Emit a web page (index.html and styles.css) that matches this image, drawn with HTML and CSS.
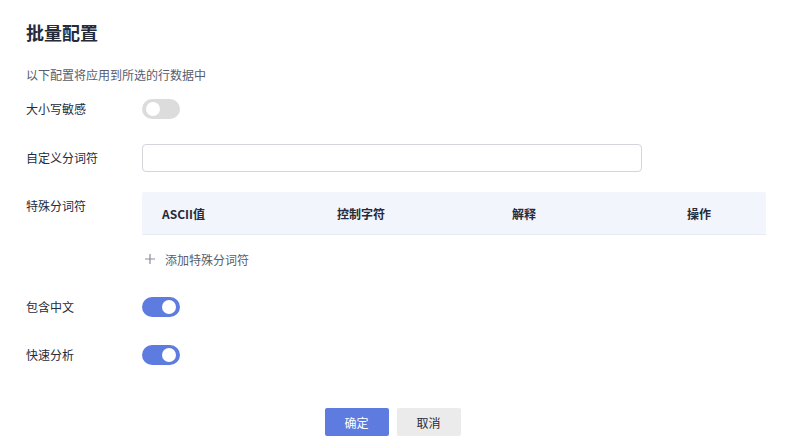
FILE: index.html
```html
<html>

<head>
    <meta charset="utf-8">
    <title>批量配置</title>
    <link rel="stylesheet" href="styles.css">
</head>
<body>
    <div class="dialog">
        <h2 class="title">批量配置</h2>
        <p class="tip">以下配置将应用到所选的行数据中</p>
        <div class="form">
            <div class="row first">
                <div class="label">大小写敏感</div>
                <div class="ctrl"><span class="switch"></span></div>
            </div>
            <div class="row">
                <div class="label">自定义分词符</div>
                <div class="ctrl"><input class="input" type="text"></div>
            </div>
            <div class="row">
                <div class="label">特殊分词符</div>
                <div class="ctrl grow">
                    <div class="thead">
                        <div class="th">ASCII值</div>
                        <div class="th">控制字符</div>
                        <div class="th">解释</div>
                        <div class="th">操作</div>
                    </div>
                    <div class="add">
                        <svg width="10" height="10" viewBox="0 0 10 10"><path d="M5 0V10M0 5H10" stroke="#8a8e99" stroke-width="1.2"/></svg>
                        <span>添加特殊分词符</span>
                    </div>
                </div>
            </div>
            <div class="row">
                <div class="label">包含中文</div>
                <div class="ctrl"><span class="switch on"></span></div>
            </div>
            <div class="row">
                <div class="label">快速分析</div>
                <div class="ctrl"><span class="switch on"></span></div>
            </div>
        </div>
        <div class="footer">
            <button class="btn btnOk">确定</button>
            <button class="btn btnCancel">取消</button>
        </div>
    </div>
</body>

</html>
```

FILE: styles.css
```css
body {
    margin: 0;
    background: #fff;
    font-family: "Noto Sans CJK SC", "Noto Sans", sans-serif;
    font-size: 12px;
    color: #252b3a;
}
.dialog {
    padding: 20px 19px 0 26px;
}
.title {
    margin: 0;
    font-size: 18px;
    line-height: 24px;
    font-weight: bold;
}
.tip {
    margin: 21px 0 0;
    line-height: 20px;
    color: #575d6c;
}
.form {
    margin-top: 10px;
}
.row {
    display: flex;
    align-items: flex-start;
    margin-bottom: 20px;
}
.row.first {
    margin-bottom: 21px;
}
.label {
    width: 116px;
    flex: none;
    line-height: 28px;
}
.ctrl {
    min-height: 28px;
    display: flex;
    align-items: center;
}
.ctrl.grow {
    flex: 1;
    display: block;
}
.switch {
    display: inline-block;
    position: relative;
    width: 38px;
    height: 20px;
    border-radius: 10px;
    background: #dcdcdc;
}
.switch::after {
    content: "";
    position: absolute;
    left: 4px;
    top: 3px;
    width: 14px;
    height: 14px;
    border-radius: 50%;
    background: #fff;
}
.switch.on {
    background: #5e7ce0;
}
.switch.on::after {
    left: 20px;
}
.input {
    width: 500px;
    height: 28px;
    box-sizing: border-box;
    border: 1px solid #d3d5db;
    border-radius: 4px;
    outline: none;
}
.thead {
    display: grid;
    grid-template-columns: 175px 175px 175px 1fr;
    height: 42px;
    align-items: center;
    padding-left: 20px;
    background: #f2f5fc;
    border-bottom: 1px solid #e6ebf5;
    border-radius: 2px 2px 0 0;
}
.th {
    font-weight: bold;
}
.add {
    display: flex;
    align-items: center;
    margin-top: 10px;
    height: 28px;
    padding-left: 3px;
    color: #575d6c;
}
.add svg {
    margin-right: 10px;
}
.footer {
    display: flex;
    justify-content: center;
    gap: 8px;
    margin-top: 39px;
    margin-left: -26px;
    margin-right: -19px;
}
.btn {
    width: 64px;
    height: 28px;
    border: none;
    border-radius: 2px;
    font-family: inherit;
    font-size: 12px;
}
.btnOk {
    background: #5e7ce0;
    color: #fff;
}
.btnCancel {
    background: #ebebeb;
    color: #252b3a;
}
```
